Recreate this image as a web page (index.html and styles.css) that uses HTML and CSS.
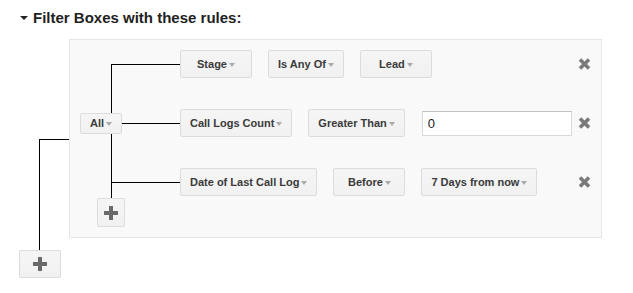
FILE: index.html
```html
<!DOCTYPE html>
<html>
<head>
<meta charset="utf-8">
<link rel="stylesheet" href="styles.css">
</head>
<body>
<h2 class="title"><span class="caret"></span>Filter Boxes with these rules:</h2>
<div class="root">
  <div class="root-side">
    <div class="root-line"></div>
    <button class="btn btn-plus btn-plus-outer"><svg width="14" height="14" viewBox="0 0 14 14"><path d="M7 0V14M0 7H14" stroke="#6a6a6a" stroke-width="4"/></svg></button>
  </div>
  <div class="panel">
    <div class="group-op"><button class="btn btn-all">All<span class="arrow"></span></button></div>
    <div class="rules">
      <div class="rule">
        <button class="btn">Stage<span class="arrow"></span></button>
        <button class="btn">Is Any Of<span class="arrow"></span></button>
        <button class="btn">Lead<span class="arrow"></span></button>
        <span class="remove"><svg width="13" height="12" viewBox="0 0 13 12"><path d="M2 1.5L11 10.5M11 1.5L2 10.5" stroke="#7a7a7a" stroke-width="3.6"/></svg></span>
      </div>
      <div class="rule">
        <button class="btn">Call Logs Count<span class="arrow"></span></button>
        <button class="btn">Greater Than<span class="arrow"></span></button>
        <input class="value" type="text" value="0">
        <span class="remove"><svg width="13" height="12" viewBox="0 0 13 12"><path d="M2 1.5L11 10.5M11 1.5L2 10.5" stroke="#7a7a7a" stroke-width="3.6"/></svg></span>
      </div>
      <div class="rule">
        <button class="btn">Date of Last Call Log<span class="arrow"></span></button>
        <button class="btn">Before<span class="arrow"></span></button>
        <button class="btn">7 Days from now<span class="arrow"></span></button>
        <span class="remove"><svg width="13" height="12" viewBox="0 0 13 12"><path d="M2 1.5L11 10.5M11 1.5L2 10.5" stroke="#7a7a7a" stroke-width="3.6"/></svg></span>
      </div>
    </div>
    <div class="add-cell"><button class="btn btn-plus btn-plus-inner"><svg width="14" height="14" viewBox="0 0 14 14"><path d="M7 0V14M0 7H14" stroke="#6a6a6a" stroke-width="4"/></svg></button></div>
  </div>
</div>
</body>
</html>
```

FILE: styles.css
```css
* { box-sizing: border-box; }
body {
  margin: 0;
  font-family: Arial, "Liberation Sans", sans-serif;
  background: #fff;
}
.title {
  margin: 0;
  padding: 10px 0 0 20px;
  height: 26px;
  font-size: 15px;
  line-height: 16px;
  font-weight: bold;
  color: #222;
  display: flex;
  align-items: center;
  gap: 5px;
}
.caret {
  width: 0;
  height: 0;
  border-left: 4px solid transparent;
  border-right: 4px solid transparent;
  border-top: 4px solid #222;
}
.root {
  display: flex;
  margin: 13px 0 0 19px;
}
.root-side {
  width: 50px;
  display: flex;
  flex-direction: column;
}
.root-line {
  flex: 1;
  margin: 100px 0 0 20px;
  border-left: 1px solid #000;
  border-top: 1px solid #000;
}
.btn {
  font-family: Arial, "Liberation Sans", sans-serif;
  font-size: 11px;
  font-weight: bold;
  color: #3a3a3a;
  background: linear-gradient(#f5f5f5, #f1f1f1);
  border: 1px solid #dcdcdc;
  border-radius: 2px;
  height: 28px;
  min-width: 72px;
  padding: 0 9px;
  display: inline-flex;
  align-items: center;
  justify-content: center;
  gap: 2px;
  margin: 0;
  flex: none;
}
.arrow {
  width: 0;
  height: 0;
  border-left: 3.5px solid transparent;
  border-right: 3.5px solid transparent;
  border-top: 4px solid #aaa;
  margin-top: 1px;
}
.btn-plus {
  padding: 0;
  min-width: 0;
}
.btn-plus-outer {
  width: 42px;
  height: 28px;
}
.btn-plus-inner {
  width: 28px;
  height: 29px;
}
.panel {
  width: 533px;
  border: 1px solid #e6e6e6;
  background: #f9f9f9;
  padding: 10px 10px 10px 0;
  display: grid;
  grid-template-columns: 110px 1fr;
  row-gap: 2px;
  margin-bottom: 40px;
}
.group-op {
  position: relative;
  display: flex;
  align-items: center;
  padding-left: 10px;
}
.group-op::before {
  content: "";
  position: absolute;
  left: 41px;
  top: 14px;
  bottom: -2px;
  border-left: 1px solid #000;
}
.btn-all {
  position: relative;
  z-index: 1;
  min-width: 42px;
  height: 21px;
  padding: 0 8px;
}
.rules {
  display: flex;
  flex-direction: column;
  gap: 31px;
}
.rule {
  position: relative;
  display: flex;
  align-items: center;
  height: 28px;
}
.rule::before {
  content: "";
  position: absolute;
  left: -69px;
  width: 69px;
  top: 14px;
  border-top: 1px solid #000;
}
.rule > .btn + .btn,
.rule > .btn + .value {
  margin-left: 16px;
}
.value {
  width: 150px;
  height: 25px;
  margin: 0;
  border: 1px solid #d9d9d9;
  border-top-color: #c0c0c0;
  background: #fff;
  font-family: Arial, "Liberation Sans", sans-serif;
  font-size: 13px;
  color: #222;
  padding: 0 5px;
}
.rule > .btn + .value {
  margin-left: 17px;
}
.remove {
  margin-left: auto;
  width: 13px;
  height: 12px;
  display: flex;
}
.add-cell {
  padding-left: 27px;
}
```
